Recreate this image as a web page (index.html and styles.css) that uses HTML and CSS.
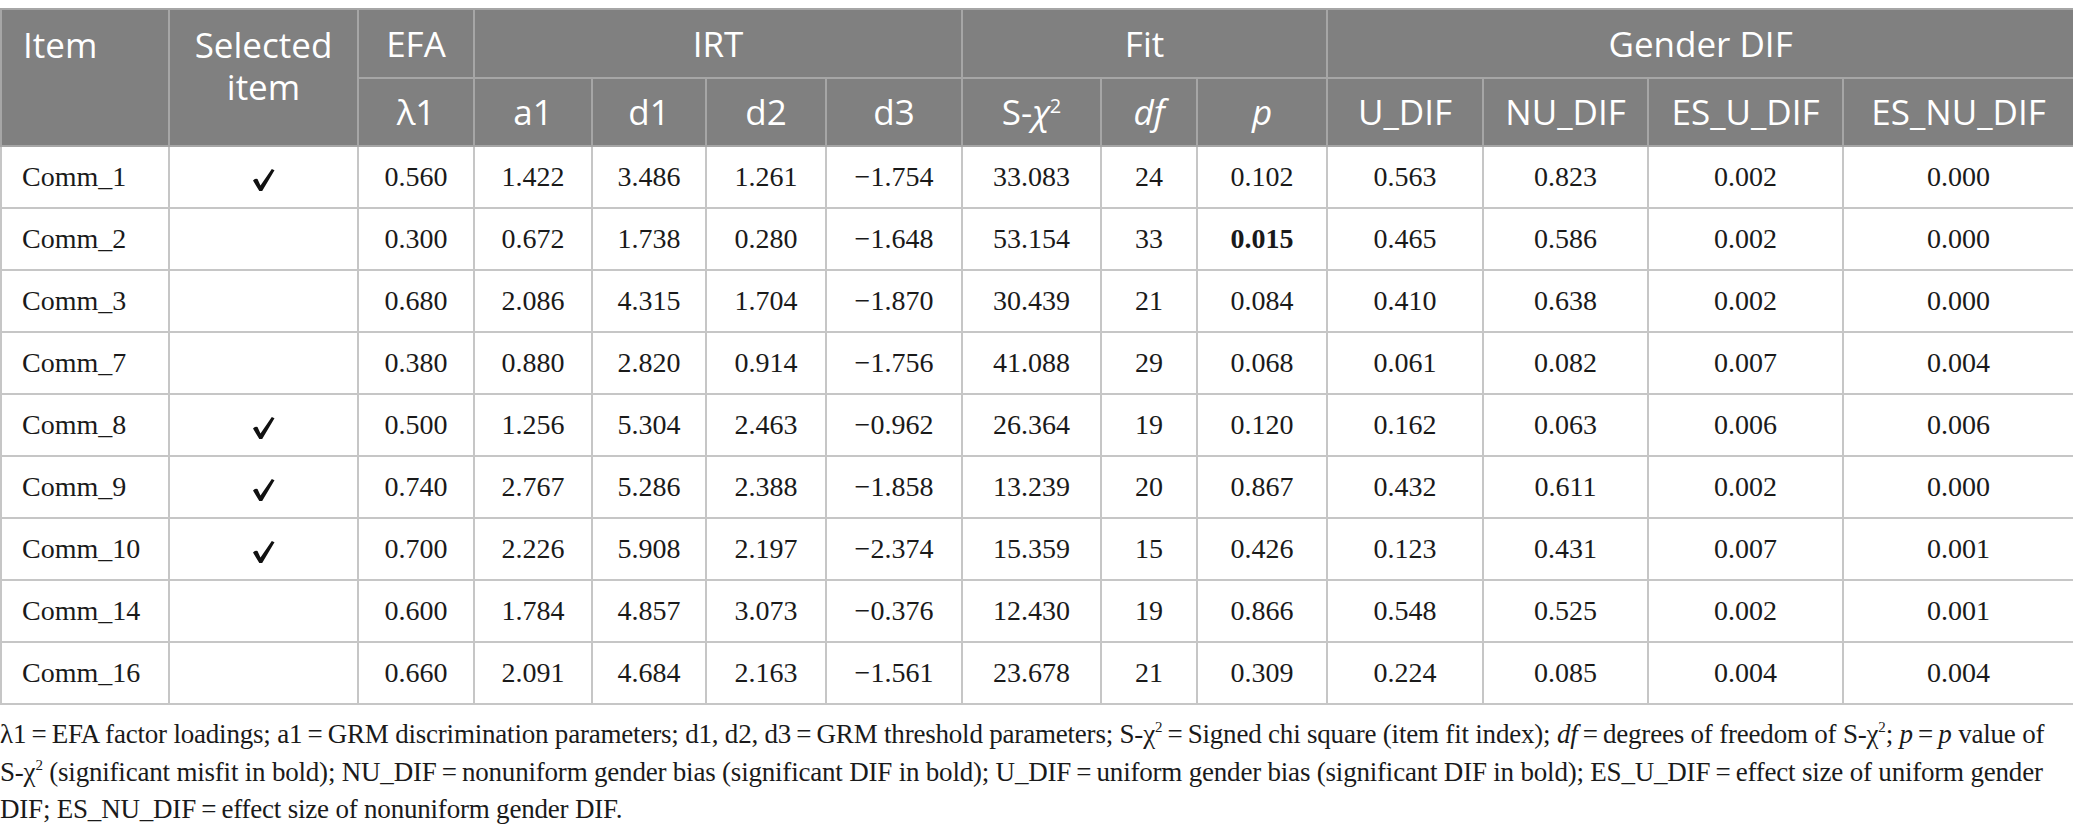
FILE: index.html
```html
<!DOCTYPE html>
<html lang="en">
<head>
<meta charset="UTF-8">
<meta name="viewport" content="width=device-width, initial-scale=1.0">
<title>Item selection table</title>
<link rel="stylesheet" href="styles.css">
</head>
<body>
<table class="items">
    <colgroup>
        <col class="w-item"><col class="w-sel"><col class="w-efa"><col class="w-a1"><col class="w-d1"><col class="w-d2"><col class="w-d3">
        <col class="w-chi"><col class="w-df"><col class="w-p"><col class="w-u"><col class="w-nu"><col class="w-esu"><col class="w-esnu">
    </colgroup>
    <thead>
        <tr class="group">
            <th rowspan="2" class="lead left">Item</th>
            <th rowspan="2" class="lead">Selected<br>item</th>
            <th>EFA</th>
            <th colspan="4">IRT</th>
            <th colspan="3">Fit</th>
            <th colspan="4">Gender DIF</th>
        </tr>
        <tr class="sub">
            <th>λ1</th>
            <th>a1</th>
            <th>d1</th>
            <th>d2</th>
            <th>d3</th>
            <th>S-<i>χ</i><sup>2</sup></th>
            <th><i>df</i></th>
            <th><i>p</i></th>
            <th>U_DIF</th>
            <th>NU_DIF</th>
            <th>ES_U_DIF</th>
            <th>ES_NU_DIF</th>
        </tr>
    </thead>
    <tbody>
        <tr><td class="left">Comm_1</td><td><svg class="tick" viewBox="0 0 22 22"><path d="M0 11.5 Q2 9 4.5 10 L7.5 16.5 L18.8 0 L21.5 1.2 L9.2 22 L6.3 22 Z"/></svg></td><td>0.560</td><td>1.422</td><td>3.486</td><td>1.261</td><td>−1.754</td><td>33.083</td><td>24</td><td>0.102</td><td>0.563</td><td>0.823</td><td>0.002</td><td>0.000</td></tr>
        <tr><td class="left">Comm_2</td><td></td><td>0.300</td><td>0.672</td><td>1.738</td><td>0.280</td><td>−1.648</td><td>53.154</td><td>33</td><td><b>0.015</b></td><td>0.465</td><td>0.586</td><td>0.002</td><td>0.000</td></tr>
        <tr><td class="left">Comm_3</td><td></td><td>0.680</td><td>2.086</td><td>4.315</td><td>1.704</td><td>−1.870</td><td>30.439</td><td>21</td><td>0.084</td><td>0.410</td><td>0.638</td><td>0.002</td><td>0.000</td></tr>
        <tr><td class="left">Comm_7</td><td></td><td>0.380</td><td>0.880</td><td>2.820</td><td>0.914</td><td>−1.756</td><td>41.088</td><td>29</td><td>0.068</td><td>0.061</td><td>0.082</td><td>0.007</td><td>0.004</td></tr>
        <tr><td class="left">Comm_8</td><td><svg class="tick" viewBox="0 0 22 22"><path d="M0 11.5 Q2 9 4.5 10 L7.5 16.5 L18.8 0 L21.5 1.2 L9.2 22 L6.3 22 Z"/></svg></td><td>0.500</td><td>1.256</td><td>5.304</td><td>2.463</td><td>−0.962</td><td>26.364</td><td>19</td><td>0.120</td><td>0.162</td><td>0.063</td><td>0.006</td><td>0.006</td></tr>
        <tr><td class="left">Comm_9</td><td><svg class="tick" viewBox="0 0 22 22"><path d="M0 11.5 Q2 9 4.5 10 L7.5 16.5 L18.8 0 L21.5 1.2 L9.2 22 L6.3 22 Z"/></svg></td><td>0.740</td><td>2.767</td><td>5.286</td><td>2.388</td><td>−1.858</td><td>13.239</td><td>20</td><td>0.867</td><td>0.432</td><td>0.611</td><td>0.002</td><td>0.000</td></tr>
        <tr><td class="left">Comm_10</td><td><svg class="tick" viewBox="0 0 22 22"><path d="M0 11.5 Q2 9 4.5 10 L7.5 16.5 L18.8 0 L21.5 1.2 L9.2 22 L6.3 22 Z"/></svg></td><td>0.700</td><td>2.226</td><td>5.908</td><td>2.197</td><td>−2.374</td><td>15.359</td><td>15</td><td>0.426</td><td>0.123</td><td>0.431</td><td>0.007</td><td>0.001</td></tr>
        <tr><td class="left">Comm_14</td><td></td><td>0.600</td><td>1.784</td><td>4.857</td><td>3.073</td><td>−0.376</td><td>12.430</td><td>19</td><td>0.866</td><td>0.548</td><td>0.525</td><td>0.002</td><td>0.001</td></tr>
        <tr><td class="left">Comm_16</td><td></td><td>0.660</td><td>2.091</td><td>4.684</td><td>2.163</td><td>−1.561</td><td>23.678</td><td>21</td><td>0.309</td><td>0.224</td><td>0.085</td><td>0.004</td><td>0.004</td></tr>
    </tbody>
</table>
<p class="note">
    λ1&thinsp;=&thinsp;EFA factor loadings; a1&thinsp;=&thinsp;GRM discrimination parameters; d1, d2, d3&thinsp;=&thinsp;GRM threshold parameters; S-χ<sup>2</sup>&thinsp;=&thinsp;Signed chi square (item fit index); <i>df</i>&thinsp;=&thinsp;degrees of freedom of S-χ<sup>2</sup>; <i>p</i>&thinsp;=&thinsp;<i>p</i> value of<br>
    S-χ<sup>2</sup> (significant misfit in bold); NU_DIF&thinsp;=&thinsp;nonuniform gender bias (significant DIF in bold); U_DIF&thinsp;=&thinsp;uniform gender bias (significant DIF in bold); ES_U_DIF&thinsp;=&thinsp;effect size of uniform gender<br>
    DIF; ES_NU_DIF&thinsp;=&thinsp;effect size of nonuniform gender DIF.
</p>
</body>
</html>
```

FILE: styles.css
```css
body {
    margin: 8px 0 0;
    background: #ffffff;
    color: #1a1a1a;
    font-family: "Liberation Serif", serif;
}
.items {
    width: 2073px;
    border-collapse: collapse;
    table-layout: fixed;
}
.w-item { width: 168px; }
.w-sel { width: 189px; }
.w-efa { width: 116px; }
.w-a1 { width: 118px; }
.w-d1 { width: 114px; }
.w-d2 { width: 120px; }
.w-d3 { width: 136px; }
.w-chi { width: 139px; }
.w-df { width: 96px; }
.w-p { width: 130px; }
.w-u { width: 156px; }
.w-nu { width: 165px; }
.w-esu { width: 195px; }
.w-esnu { width: 231px; }

.items th {
    background: #808080;
    color: #ffffff;
    font-family: "Open Sans", sans-serif;
    font-weight: 400;
    font-size: 35px;
    line-height: 40px;
    border: 2px solid #a6a6a6;
    padding: 0;
    text-align: center;
    vertical-align: middle;
    white-space: nowrap;
}
.items .group th {
    height: 67px;
}
.items .sub th {
    height: 66px;
}
.items th.lead {
    vertical-align: top;
    padding-top: 14px;
    line-height: 42px;
}
.items th.left {
    text-align: left;
    padding-left: 21px;
}
.items th i {
    font-style: italic;
}
.items th sup {
    font-size: 20px;
    line-height: 0;
    vertical-align: 12px;
}
.items td {
    height: 60px;
    padding: 0;
    border: 2px solid #c6c6c6;
    font-size: 28px;
    text-align: center;
    vertical-align: middle;
}
.items td.left {
    text-align: left;
    padding-left: 20px;
}
.tick {
    display: inline-block;
    width: 22px;
    height: 22px;
    vertical-align: middle;
    fill: #111111;
}
.note {
    margin: 11px 0 0;
    font-size: 27px;
    line-height: 37.5px;
    letter-spacing: -0.2px;
    white-space: nowrap;
}
.note sup {
    font-size: 15px;
    line-height: 0;
    vertical-align: 11px;
}
```
